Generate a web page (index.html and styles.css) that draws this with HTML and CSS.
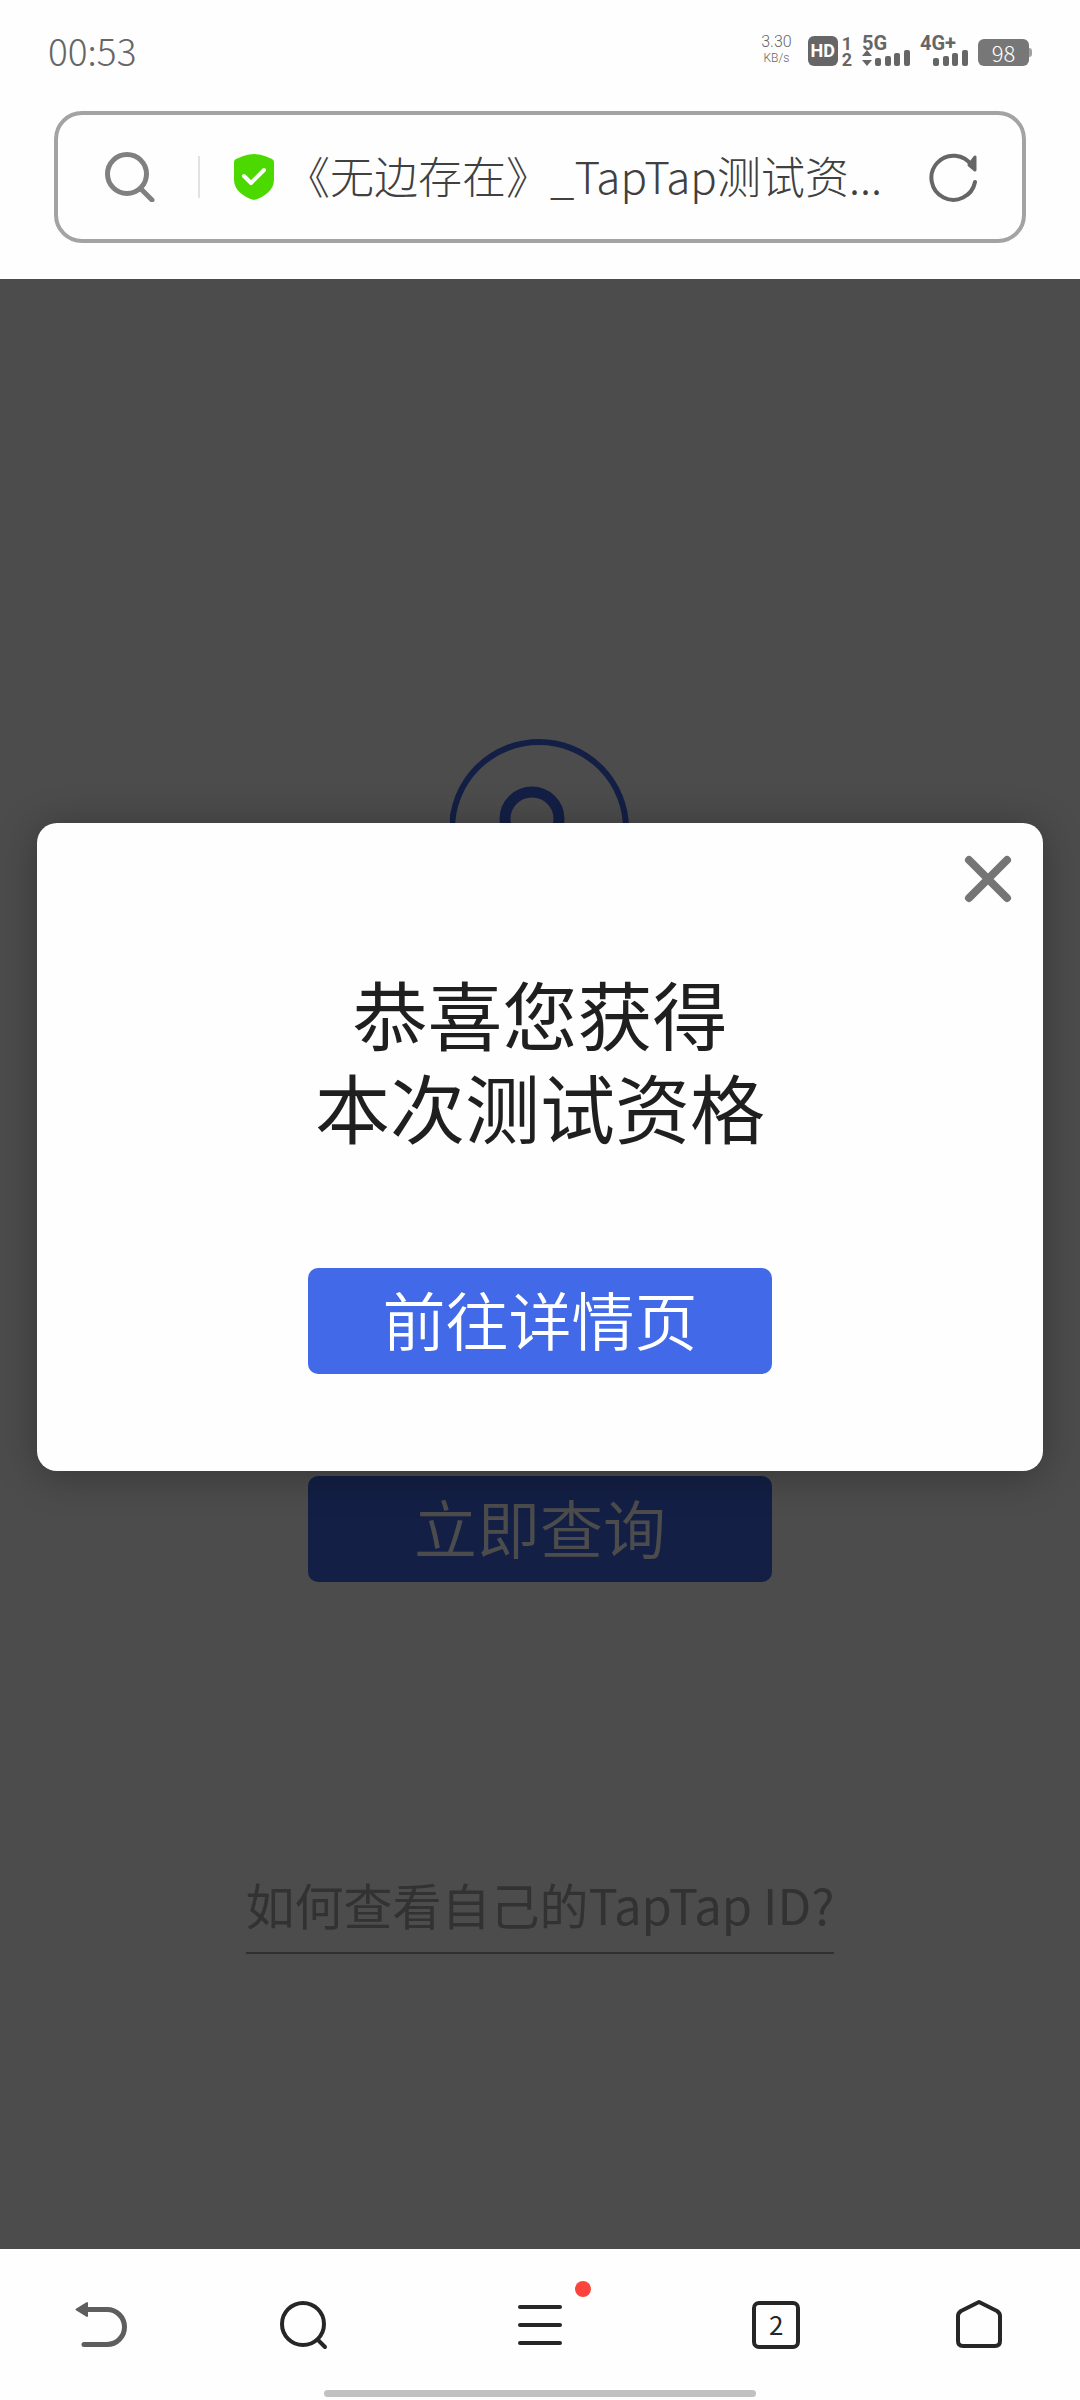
FILE: index.html
```html
<!DOCTYPE html>
<html lang="zh-CN">
<head>
  <meta charset="UTF-8">
  <meta name="viewport" content="width=device-width, initial-scale=1.0">
  <title>《无边存在》_TapTap测试资格查询</title>
  <link rel="stylesheet" href="styles.css">
</head>
<body>
  <header class="top">
    <div class="status-bar">
      <span class="time">00:53</span>
      <div class="status-icons">
        <div class="speed"><span>3.30</span><span class="unit">KB/s</span></div>
        <div class="hd">
          <span class="hd-badge">HD</span>
          <span class="hd-sims"><span>1</span><span>2</span></span>
        </div>
        <div class="signal">
          <span class="network">5G</span>
          <svg width="48" height="16" viewBox="0 0 48 16" fill="#666">
            <path d="M5 0l5 6H0zM5 16l5-6H0z"/>
            <rect x="13" y="8" width="6" height="8" rx="2"/>
            <rect x="23" y="6" width="6" height="10" rx="2"/>
            <rect x="32" y="3" width="6" height="13" rx="2"/>
            <rect x="42" y="0" width="6" height="16" rx="2"/>
          </svg>
        </div>
        <div class="signal">
          <span class="network">4G+</span>
          <svg width="48" height="16" viewBox="0 0 48 16" fill="#666">
            <rect x="13" y="8" width="6" height="8" rx="2"/>
            <rect x="23" y="6" width="6" height="10" rx="2"/>
            <rect x="32" y="3" width="6" height="13" rx="2"/>
            <rect x="42" y="0" width="6" height="16" rx="2"/>
          </svg>
        </div>
        <div class="battery"><span class="level">98</span></div>
      </div>
    </div>

    <form class="address-bar">
      <button type="button" class="icon-btn" aria-label="搜索">
        <svg width="50" height="50" viewBox="0 0 50 50" fill="none" stroke="#808080" stroke-width="5" stroke-linecap="round">
          <circle cx="22" cy="22" r="19.5"/>
          <path d="M36 37l11 11"/>
        </svg>
      </button>
      <span class="divider"></span>
      <svg class="shield" width="40" height="46" viewBox="0 0 40 46">
        <path fill="#4cd900" d="M20 0C26 0 34 3 38 5Q40 6 40 8V26C40 36 30 43 22 45.500Q20 46 18 45.500C10 43 0 36 0 26V8Q0 6 2 5C6 3 14 0 20 0Z"/>
        <path fill="none" stroke="#fff" stroke-width="4" stroke-linecap="round" stroke-linejoin="round" d="M10 22l7 7 13-13"/>
      </svg>
      <input class="address" type="text" aria-label="地址" value="《无边存在》_TapTap测试资..." readonly>
      <button type="button" class="icon-btn" aria-label="刷新">
        <svg width="48" height="50" viewBox="0 0 48 50" fill="none" stroke="#666" stroke-width="4" stroke-linecap="round">
          <path d="M46 30A22 22 0 1 1 43 14"/>
          <path fill="#666" stroke-linejoin="round" stroke-width="3" d="M46 5v13l-6-5z"/>
        </svg>
      </button>
    </form>
  </header>

  <main class="page">
    <svg class="avatar" width="180" height="180" viewBox="0 0 180 180" fill="none" stroke="#4169e8">
      <circle cx="89" cy="90" r="87" stroke-width="6"/>
      <circle cx="82" cy="80" r="27" stroke-width="11"/>
    </svg>
    <button type="button" class="btn query">立即查询</button>
    <a class="help" href="#">如何查看自己的TapTap ID?</a>

    <div class="overlay">
      <div class="modal" role="dialog" aria-labelledby="result">
        <button type="button" class="icon-btn close" aria-label="关闭">
          <svg width="48" height="48" viewBox="0 0 48 48" stroke="#757575" stroke-width="8" stroke-linecap="round">
            <path d="M5 5l38 38M43 5L5 43"/>
          </svg>
        </button>
        <h1 class="result" id="result">恭喜您获得<br>本次测试资格</h1>
        <button type="button" class="btn">前往详情页</button>
      </div>
    </div>
  </main>

  <footer class="bottom">
    <nav class="toolbar">
      <button type="button" class="icon-btn" aria-label="后退">
        <svg width="52" height="50" viewBox="0 0 52 50" fill="none" stroke="#5e5e5e" stroke-width="5" stroke-linecap="round">
          <path d="M10 9.500H32A17.500 17.500 0 0 1 32 44.500H9"/>
          <path fill="#5e5e5e" stroke-width="2" stroke-linejoin="round" d="M1.500 9.500L12 3v13z"/>
        </svg>
      </button>
      <button type="button" class="icon-btn" aria-label="搜索">
        <svg width="48" height="50" viewBox="0 0 48 50" fill="none" stroke="#262626" stroke-width="4" stroke-linecap="round">
          <circle cx="23" cy="24" r="21"/>
          <path d="M38 40l7 7"/>
        </svg>
      </button>
      <button type="button" class="icon-btn menu" aria-label="菜单">
        <svg width="44" height="50" viewBox="0 0 44 50" stroke="#262626" stroke-width="4" stroke-linecap="round">
          <path d="M2 7h40M2 25h40M2 43h40"/>
        </svg>
        <span class="dot"></span>
      </button>
      <button type="button" class="icon-btn" aria-label="2 个标签页"><span class="tabs">2</span></button>
      <button type="button" class="icon-btn" aria-label="主页">
        <svg width="46" height="50" viewBox="0 0 46 50" fill="none" stroke="#262626" stroke-width="4" stroke-linejoin="round">
          <path d="M23 2L41 11Q44 13 44 16V41Q44 46 39 46H7Q2 46 2 41V16Q2 13 5 11Z"/>
        </svg>
      </button>
    </nav>
    <div class="home-indicator"></div>
  </footer>
</body>
</html>
```
FILE: styles.css
```css
* {
  box-sizing: border-box;
}

body {
  margin: 0;
  min-height: 100vh;
  display: flex;
  flex-direction: column;
  background: #fefefe;
  font-family: "Noto Sans CJK SC", sans-serif;
  color: #1f1f1f;
}

svg {
  display: block;
}

.icon-btn {
  position: relative;
  padding: 0;
  border: none;
  background: none;
  cursor: pointer;
}

/* Status bar */
.status-bar {
  height: 111px;
  padding: 36px 48px 0;
  display: flex;
  justify-content: space-between;
  color: #666;
}

.time {
  font-size: 37px;
  line-height: 28px;
  font-weight: 300;
}

.status-icons {
  display: flex;
  height: 30px;
  gap: 10px;
}

.speed {
  display: flex;
  flex-direction: column;
  align-items: center;
  margin: -4px 6px 0 0;
  font: 300 16px/19px Roboto, sans-serif;
}

.unit {
  font-size: 12px;
  line-height: 15px;
}

.hd {
  display: flex;
  gap: 4px;
}

.hd-badge {
  width: 30px;
  border-radius: 6px;
  background: #666;
  color: #fff;
  font: bold 18px/30px Roboto, sans-serif;
  text-align: center;
}

.hd-sims {
  display: flex;
  flex-direction: column;
  font: bold 18px/16px Roboto, sans-serif;
}

.signal {
  display: flex;
  flex-direction: column;
}

.network {
  font: bold 20px/14px Roboto, sans-serif;
}

.battery {
  display: flex;
  align-items: center;
  align-self: flex-end;
}

.battery::after {
  content: '';
  width: 3px;
  height: 9px;
  border-radius: 0 3px 3px 0;
  background: #a0a0a0;
}

.level {
  width: 51px;
  border-radius: 6px;
  background: #777;
  color: #fff;
  font-size: 22px;
  line-height: 27px;
  font-weight: 300;
  text-align: center;
}

/* Address bar */
.address-bar {
  height: 132px;
  margin: 0 54px 36px;
  padding: 0 45px 0 47px;
  display: flex;
  align-items: center;
  border: 4px solid #a3a3a3;
  border-radius: 28px;
}

.divider {
  width: 2px;
  height: 42px;
  margin: 0 34px 0 43px;
  background: #e2e2e2;
}

.shield {
  flex: none;
}

.address {
  flex: 1;
  min-width: 0;
  padding: 0 0 4px;
  margin: 0 24px 0 12px;
  border: none;
  outline: none;
  background: none;
  color: #404040;
  font-family: inherit;
  font-size: 44px;
  font-weight: 300;
}

/* Page */
.page {
  flex: 1;
  position: relative;
  padding-top: 460px;
  display: flex;
  flex-direction: column;
  align-items: center;
  background: #fff;
}

.btn {
  width: 464px;
  max-width: 100%;
  height: 106px;
  padding: 0 0 6px;
  border: none;
  border-radius: 10px;
  background: #4169e8;
  color: #fff;
  font-family: inherit;
  font-size: 63px;
  line-height: 100px;
  font-weight: 350;
  cursor: pointer;
}

.query {
  margin: 557px 0 288px;
}

.help {
  padding-bottom: 14px;
  border-bottom: 2px solid #a0a0a0;
  color: #a8a8a8;
  font-size: 49px;
  line-height: 68px;
  font-weight: 400;
  text-decoration: none;
}

/* Result dialog */
.overlay {
  position: absolute;
  inset: 0;
  padding: 544px 37px 0;
  background: rgba(0, 0, 0, 0.7);
}

.modal {
  position: relative;
  padding: 143px 40px 97px;
  display: flex;
  flex-direction: column;
  align-items: center;
  gap: 116px;
  border-radius: 20px;
  background: #fefefe;
  box-shadow: 0 4px 40px rgba(0, 0, 0, 0.3);
}

.close {
  position: absolute;
  top: 32px;
  right: 31px;
}

.result {
  margin: 0;
  font-size: 75px;
  line-height: 93px;
  font-weight: 400;
  text-align: center;
}

/* Browser toolbar */
.bottom {
  padding-bottom: 3px;
}

.toolbar {
  height: 141px;
  padding-top: 10px;
  display: grid;
  grid-template-columns: 3fr 3fr 4fr 3fr 3fr;
  place-items: center;
}

.dot {
  position: absolute;
  top: -19px;
  right: -29px;
  width: 16px;
  height: 16px;
  border-radius: 50%;
  background: #fb453c;
}

.tabs {
  display: block;
  width: 48px;
  height: 48px;
  border: 4px solid #262626;
  border-radius: 7px;
  color: #262626;
  font-family: "Noto Sans CJK SC", sans-serif;
  font-size: 26px;
  line-height: 38px;
}

.home-indicator {
  width: 40%;
  height: 7px;
  margin: 0 auto;
  border-radius: 4px;
  background: #c1c1c1;
}
```
